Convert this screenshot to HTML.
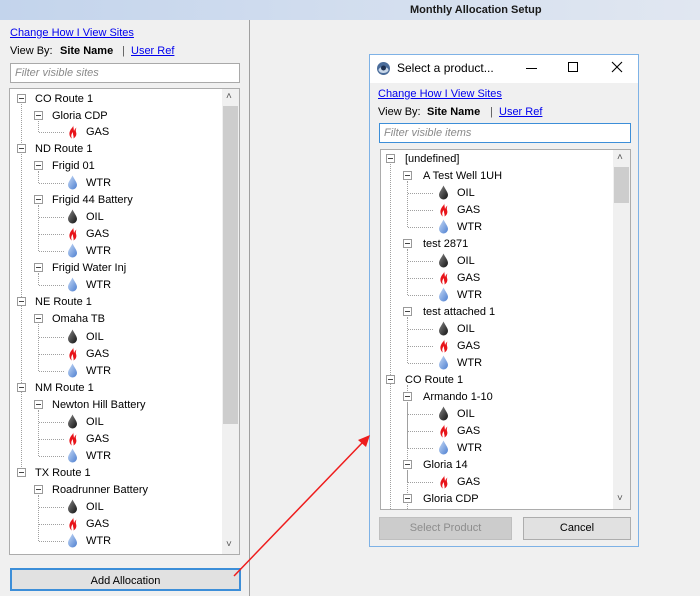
<!DOCTYPE html>
<html><head><meta charset="utf-8"><style>
*{margin:0;padding:0;box-sizing:border-box}
body{width:700px;height:596px;overflow:hidden;background:#f0f0f0;font-family:"Liberation Sans",sans-serif;font-size:11px;color:#000;position:relative}
.a{position:absolute}
.hdr{left:0;top:0;width:700px;height:20px;background:linear-gradient(90deg,#c3d4ec,#e1e7f1)}
.ttl{left:410px;top:4px;font-weight:bold;font-size:11px;color:#1a1a1a}
.lnk{color:#0000ee;text-decoration:underline}
.tree{background:#fff;border:1px solid #acacac}
.r{position:absolute;height:17px;line-height:17px;white-space:nowrap}
.ex{position:absolute;width:9px;height:9px;border:1px solid #9a9a9a;background:#fff;margin-top:-1px}
.ex:after{content:"";position:absolute;left:1px;top:3px;width:5px;height:1px;background:#444}
.vl{position:absolute;width:0;border-left:1px dotted #a0a0a0}
.hl{position:absolute;height:0;border-top:1px dotted #a0a0a0}
.ic{position:absolute;width:11px;height:15px}
.sb{position:absolute;background:#f0f0f0}
.th{position:absolute;background:#cdcdcd}
.btn{position:absolute;border:1px solid #adadad;background:#e1e1e1;text-align:center;line-height:21px}
</style></head><body>
<svg width="0" height="0" style="position:absolute">
<defs>
<linearGradient id="go" x1="0" y1="0" x2="1" y2="1"><stop offset="0" stop-color="#888"/><stop offset="1" stop-color="#111"/></linearGradient>
<linearGradient id="gw" x1="0" y1="0" x2="1" y2="1"><stop offset="0" stop-color="#c9dcf7"/><stop offset="1" stop-color="#4d7fd0"/></linearGradient>
<symbol id="oil" viewBox="0 0 11 15"><path d="M5.5 0.5C4 4 1 7 1 10a4.5 4.5 0 0 0 9 0C10 7 7 4 5.5 0.5z" fill="url(#go)"/></symbol>
<symbol id="wtr" viewBox="0 0 11 15"><path d="M5.5 0.5C4 4 1 7 1 10a4.5 4.5 0 0 0 9 0C10 7 7 4 5.5 0.5z" fill="url(#gw)"/></symbol>
<symbol id="gas" viewBox="0 0 11 15"><path d="M6 0.5C7 3 4 4 3 7 1.5 10 3 13.5 5 14.5 3.5 12 4.5 9.5 6 8 5.5 10.5 7 12 6.5 14.5 9 13 10 10.5 9 8 8.5 6 9 4.5 9.5 3.5 8 4.5 7.5 6 7 7 6.5 3 6 0.5z" fill="#e8141a"/></symbol>
</defs></svg>

<div class="a hdr"></div>
<div class="a ttl">Monthly Allocation Setup</div>
<div class="a" style="left:249px;top:20px;width:1px;height:576px;background:#a0a0a0"></div>

<div class="a lnk" style="left:10px;top:27px">Change How I View Sites</div>
<div class="a" style="left:10px;top:45px">View By:</div>
<div class="a" style="left:60px;top:45px;font-weight:bold">Site Name</div>
<div class="a" style="left:122px;top:45px;color:#555">|</div>
<div class="a lnk" style="left:131px;top:45px">User Ref</div>
<div class="a" style="left:10px;top:63px;width:230px;height:20px;background:#fff;border:1px solid #a9a9a9;color:#8a8a8a;font-style:italic;padding:3px 4px">Filter visible sites</div>

<div class="a tree" style="left:9px;top:88px;width:231px;height:467px"></div>
<div class="sb" style="left:222px;top:89px;width:17px;height:465px"></div>
<div class="th" style="left:223px;top:106px;width:15px;height:318px"></div>
<div class="a" style="left:226px;top:91px;color:#555;font-size:10px">&#708;</div>
<div class="a" style="left:226px;top:539px;color:#555;font-size:10px">&#709;</div>

<div class="vl" style="left:21px;top:104px;height:369px"></div>
<div class="vl" style="left:38px;top:121px;height:11px"></div>
<div class="vl" style="left:38px;top:171px;height:12px"></div>
<div class="vl" style="left:38px;top:205px;height:46px"></div>
<div class="vl" style="left:38px;top:273px;height:12px"></div>
<div class="vl" style="left:38px;top:324px;height:47px"></div>
<div class="vl" style="left:38px;top:410px;height:46px"></div>
<div class="vl" style="left:38px;top:495px;height:46px"></div>

<div class="ex" style="left:17px;top:95px"></div><div class="r" style="left:35px;top:91px">CO Route 1</div>
<div class="ex" style="left:34px;top:112px"></div><div class="r" style="left:52px;top:108px">Gloria CDP</div>
<div class="hl" style="left:39px;top:132px;width:25px"></div><svg class="ic" style="left:67px;top:124px"><use href="#gas"/></svg><div class="r" style="left:86px;top:124px">GAS</div>
<div class="ex" style="left:17px;top:145px"></div><div class="r" style="left:35px;top:141px">ND Route 1</div>
<div class="ex" style="left:34px;top:162px"></div><div class="r" style="left:52px;top:158px">Frigid 01</div>
<div class="hl" style="left:39px;top:183px;width:25px"></div><svg class="ic" style="left:67px;top:175px"><use href="#wtr"/></svg><div class="r" style="left:86px;top:175px">WTR</div>
<div class="ex" style="left:34px;top:196px"></div><div class="r" style="left:52px;top:192px">Frigid 44 Battery</div>
<div class="hl" style="left:39px;top:217px;width:25px"></div><svg class="ic" style="left:67px;top:209px"><use href="#oil"/></svg><div class="r" style="left:86px;top:209px">OIL</div>
<div class="hl" style="left:39px;top:234px;width:25px"></div><svg class="ic" style="left:67px;top:226px"><use href="#gas"/></svg><div class="r" style="left:86px;top:226px">GAS</div>
<div class="hl" style="left:39px;top:251px;width:25px"></div><svg class="ic" style="left:67px;top:243px"><use href="#wtr"/></svg><div class="r" style="left:86px;top:243px">WTR</div>
<div class="ex" style="left:34px;top:264px"></div><div class="r" style="left:52px;top:260px">Frigid Water Inj</div>
<div class="hl" style="left:39px;top:285px;width:25px"></div><svg class="ic" style="left:67px;top:277px"><use href="#wtr"/></svg><div class="r" style="left:86px;top:277px">WTR</div>
<div class="ex" style="left:17px;top:298px"></div><div class="r" style="left:35px;top:294px">NE Route 1</div>
<div class="ex" style="left:34px;top:315px"></div><div class="r" style="left:52px;top:311px">Omaha TB</div>
<div class="hl" style="left:39px;top:337px;width:25px"></div><svg class="ic" style="left:67px;top:329px"><use href="#oil"/></svg><div class="r" style="left:86px;top:329px">OIL</div>
<div class="hl" style="left:39px;top:354px;width:25px"></div><svg class="ic" style="left:67px;top:346px"><use href="#gas"/></svg><div class="r" style="left:86px;top:346px">GAS</div>
<div class="hl" style="left:39px;top:371px;width:25px"></div><svg class="ic" style="left:67px;top:363px"><use href="#wtr"/></svg><div class="r" style="left:86px;top:363px">WTR</div>
<div class="ex" style="left:17px;top:384px"></div><div class="r" style="left:35px;top:380px">NM Route 1</div>
<div class="ex" style="left:34px;top:401px"></div><div class="r" style="left:52px;top:397px">Newton Hill Battery</div>
<div class="hl" style="left:39px;top:422px;width:25px"></div><svg class="ic" style="left:67px;top:414px"><use href="#oil"/></svg><div class="r" style="left:86px;top:414px">OIL</div>
<div class="hl" style="left:39px;top:439px;width:25px"></div><svg class="ic" style="left:67px;top:431px"><use href="#gas"/></svg><div class="r" style="left:86px;top:431px">GAS</div>
<div class="hl" style="left:39px;top:456px;width:25px"></div><svg class="ic" style="left:67px;top:448px"><use href="#wtr"/></svg><div class="r" style="left:86px;top:448px">WTR</div>
<div class="ex" style="left:17px;top:469px"></div><div class="r" style="left:35px;top:465px">TX Route 1</div>
<div class="ex" style="left:34px;top:486px"></div><div class="r" style="left:52px;top:482px">Roadrunner Battery</div>
<div class="hl" style="left:39px;top:507px;width:25px"></div><svg class="ic" style="left:67px;top:499px"><use href="#oil"/></svg><div class="r" style="left:86px;top:499px">OIL</div>
<div class="hl" style="left:39px;top:524px;width:25px"></div><svg class="ic" style="left:67px;top:516px"><use href="#gas"/></svg><div class="r" style="left:86px;top:516px">GAS</div>
<div class="hl" style="left:39px;top:541px;width:25px"></div><svg class="ic" style="left:67px;top:533px"><use href="#wtr"/></svg><div class="r" style="left:86px;top:533px">WTR</div>

<div class="btn" style="left:10px;top:568px;width:231px;height:23px;border:2px solid #3c8ed8;line-height:20px;padding-top:1px">Add Allocation</div>

<div class="a" style="left:369px;top:54px;width:270px;height:493px;border:1px solid #7eb2e6;background:#f0f0f0"></div>
<div class="a" style="left:370px;top:55px;width:268px;height:28px;background:#fff"></div>
<svg class="a" style="left:376px;top:61px" width="15" height="15" viewBox="0 0 15 15"><circle cx="7.5" cy="7.5" r="6.5" fill="#4a6c9a"/><ellipse cx="7.5" cy="9" rx="5" ry="3" fill="#c9d8ea"/><circle cx="7.5" cy="7" r="2.5" fill="#1e3050"/></svg>
<div class="a" style="left:397px;top:61px;font-size:12px">Select a product...</div>
<div class="a" style="left:526px;top:68px;width:11px;height:1px;background:#000"></div>
<div class="a" style="left:568px;top:62px;width:10px;height:10px;border:1px solid #000"></div>
<svg class="a" style="left:611px;top:61px" width="12" height="12"><path d="M1 1L11 11M11 1L1 11" stroke="#000" stroke-width="1.1"/></svg>

<div class="a lnk" style="left:378px;top:88px">Change How I View Sites</div>
<div class="a" style="left:378px;top:106px">View By:</div>
<div class="a" style="left:427px;top:106px;font-weight:bold">Site Name</div>
<div class="a" style="left:490px;top:106px;color:#555">|</div>
<div class="a lnk" style="left:499px;top:106px">User Ref</div>
<div class="a" style="left:379px;top:123px;width:252px;height:20px;background:#fff;border:1px solid #3c8ed8;color:#8a8a8a;font-style:italic;padding:3px 4px">Filter visible items</div>

<div class="a tree" style="left:380px;top:149px;width:251px;height:361px"></div>
<div class="sb" style="left:613px;top:150px;width:17px;height:359px"></div>
<div class="th" style="left:614px;top:167px;width:15px;height:36px"></div>
<div class="a" style="left:617px;top:152px;color:#555;font-size:10px">&#708;</div>
<div class="a" style="left:617px;top:493px;color:#555;font-size:10px">&#709;</div>

<div class="vl" style="left:390px;top:164px;height:345px"></div>
<div class="vl" style="left:407px;top:181px;height:46px"></div>
<div class="vl" style="left:407px;top:249px;height:46px"></div>
<div class="vl" style="left:407px;top:317px;height:46px"></div>
<div class="vl" style="left:407px;top:402px;height:46px"></div>
<div class="vl" style="left:407px;top:470px;height:12px"></div>
<div class="vl" style="left:407px;top:385px;height:124px"></div>

<div class="ex" style="left:386px;top:155px"></div><div class="r" style="left:405px;top:151px">[undefined]</div>
<div class="ex" style="left:403px;top:172px"></div><div class="r" style="left:423px;top:168px">A Test Well 1UH</div>
<div class="hl" style="left:408px;top:193px;width:25px"></div><svg class="ic" style="left:438px;top:185px"><use href="#oil"/></svg><div class="r" style="left:457px;top:185px">OIL</div>
<div class="hl" style="left:408px;top:210px;width:25px"></div><svg class="ic" style="left:438px;top:202px"><use href="#gas"/></svg><div class="r" style="left:457px;top:202px">GAS</div>
<div class="hl" style="left:408px;top:227px;width:25px"></div><svg class="ic" style="left:438px;top:219px"><use href="#wtr"/></svg><div class="r" style="left:457px;top:219px">WTR</div>
<div class="ex" style="left:403px;top:240px"></div><div class="r" style="left:423px;top:236px">test 2871</div>
<div class="hl" style="left:408px;top:261px;width:25px"></div><svg class="ic" style="left:438px;top:253px"><use href="#oil"/></svg><div class="r" style="left:457px;top:253px">OIL</div>
<div class="hl" style="left:408px;top:278px;width:25px"></div><svg class="ic" style="left:438px;top:270px"><use href="#gas"/></svg><div class="r" style="left:457px;top:270px">GAS</div>
<div class="hl" style="left:408px;top:295px;width:25px"></div><svg class="ic" style="left:438px;top:287px"><use href="#wtr"/></svg><div class="r" style="left:457px;top:287px">WTR</div>
<div class="ex" style="left:403px;top:308px"></div><div class="r" style="left:423px;top:304px">test attached 1</div>
<div class="hl" style="left:408px;top:329px;width:25px"></div><svg class="ic" style="left:438px;top:321px"><use href="#oil"/></svg><div class="r" style="left:457px;top:321px">OIL</div>
<div class="hl" style="left:408px;top:346px;width:25px"></div><svg class="ic" style="left:438px;top:338px"><use href="#gas"/></svg><div class="r" style="left:457px;top:338px">GAS</div>
<div class="hl" style="left:408px;top:363px;width:25px"></div><svg class="ic" style="left:438px;top:355px"><use href="#wtr"/></svg><div class="r" style="left:457px;top:355px">WTR</div>
<div class="ex" style="left:386px;top:376px"></div><div class="r" style="left:405px;top:372px">CO Route 1</div>
<div class="ex" style="left:403px;top:393px"></div><div class="r" style="left:423px;top:389px">Armando 1-10</div>
<div class="hl" style="left:408px;top:414px;width:25px"></div><svg class="ic" style="left:438px;top:406px"><use href="#oil"/></svg><div class="r" style="left:457px;top:406px">OIL</div>
<div class="hl" style="left:408px;top:431px;width:25px"></div><svg class="ic" style="left:438px;top:423px"><use href="#gas"/></svg><div class="r" style="left:457px;top:423px">GAS</div>
<div class="hl" style="left:408px;top:448px;width:25px"></div><svg class="ic" style="left:438px;top:440px"><use href="#wtr"/></svg><div class="r" style="left:457px;top:440px">WTR</div>
<div class="ex" style="left:403px;top:461px"></div><div class="r" style="left:423px;top:457px">Gloria 14</div>
<div class="hl" style="left:408px;top:482px;width:25px"></div><svg class="ic" style="left:438px;top:474px"><use href="#gas"/></svg><div class="r" style="left:457px;top:474px">GAS</div>
<div class="ex" style="left:403px;top:495px"></div><div class="r" style="left:423px;top:491px">Gloria CDP</div>

<div class="btn" style="left:379px;top:517px;width:133px;height:23px;background:#cccccc;border-color:#bfbfbf;color:#8d8d8d">Select Product</div>
<div class="btn" style="left:523px;top:517px;width:108px;height:23px">Cancel</div>

<svg class="a" style="left:0;top:0" width="700" height="596"><line x1="234" y1="576" x2="363" y2="442" stroke="#ee1c1c" stroke-width="1.5"/><polygon points="370,435 358,440 366,447" fill="#ee1c1c"/></svg>
</body></html>
